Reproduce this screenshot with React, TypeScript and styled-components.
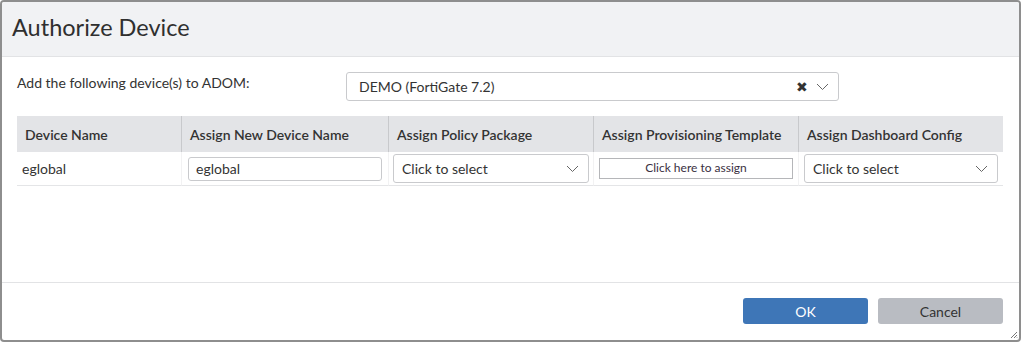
import React from "react";
import styled, { createGlobalStyle } from "styled-components";

const GlobalStyle = createGlobalStyle`
  html, body {
    margin: 0;
    padding: 0;
    background: #ffffff;
  }
  body {
    font-family: Lato, "Open Sans", "Liberation Sans", sans-serif;
    color: #333333;
  }
  * {
    box-sizing: border-box;
  }
`;

const Dialog = styled.div`
  position: relative;
  width: 1021px;
  height: 342px;
  border: 2px solid #8e8e8e;
  border-radius: 4px;
  background: #ffffff;
  display: flex;
  flex-direction: column;
  overflow: hidden;
`;

const Header = styled.div`
  height: 55px;
  flex: none;
  background: #f1f2f4;
  border-bottom: 1px solid #e2e3e5;
  display: flex;
  align-items: center;
  padding-left: 10px;
  padding-bottom: 4px;
  h1 {
    margin: 0;
    font-size: 23.5px;
    font-weight: 400;
    color: #2f2f2f;
  }
`;

const Body = styled.div`
  flex: 1;
  padding: 15px 15px 0 15px;
`;

const AdomRow = styled.div`
  display: grid;
  grid-template-columns: 329px 493px;
  align-items: center;
  font-size: 14px;
  color: #333;
  label {
    margin-top: -8px;
  }
`;

const SelectBox = styled.div<{ $h?: number; $pad?: number }>`
  height: ${(p) => p.$h ?? 29}px;
  width: 100%;
  border: 1px solid #c9cacd;
  border-radius: 3px;
  background: #fff;
  display: flex;
  align-items: center;
  padding: 0 9px 0 ${(p) => p.$pad ?? 12}px;
  font-size: 14px;
  color: #333;
  span.value {
    flex: 1;
  }
`;

const Clear = styled.span`
  font-size: 14px;
  color: #333;
  margin-right: 8px;
  line-height: 1;
`;

const Table = styled.div`
  margin-top: 15px;
  width: 986px;
  display: grid;
  grid-template-columns: 164px 207px 205px 205px 205px;
`;

const HeadCell = styled.div`
  height: 36px;
  background: #e3e4e7;
  display: flex;
  align-items: center;
  padding-left: 8px;
  font-size: 14px;
  font-weight: 600;
  color: #333;
  & + & {
    border-left: 1px solid #c8c9cc;
  }
`;

const Cell = styled.div<{ $pad?: number }>`
  height: 34px;
  display: flex;
  align-items: center;
  padding: 0 ${(p) => p.$pad ?? 5}px;
  border-bottom: 1px solid #e4e5e7;
  font-size: 14px;
  color: #333;
  & + & {
    border-left: 1px solid #f2f2f3;
  }
`;

const TextInput = styled.input`
  width: 100%;
  height: 24px;
  border: 1px solid #c9cacd;
  border-radius: 3px;
  padding: 0 7px;
  font-family: inherit;
  font-size: 14px;
  color: #333;
  outline: none;
`;

const AssignButton = styled.button`
  width: 100%;
  height: 21px;
  border: 1px solid #b5b6b9;
  border-radius: 0;
  background: #fff;
  font-family: inherit;
  font-size: 12px;
  color: #3a2f3f;
  padding: 0 0 2px;
`;

const Footer = styled.div`
  flex: none;
  height: 58px;
  border-top: 1px solid #e2e3e5;
  display: flex;
  justify-content: flex-end;
  align-items: flex-start;
  gap: 10px;
  padding: 15px 16px 0 0;
`;

const Button = styled.button<{ $primary?: boolean }>`
  width: 125px;
  height: 26px;
  border: none;
  border-radius: 3px;
  font-family: inherit;
  font-size: 14px;
  background: ${(p) => (p.$primary ? "#3e76b7" : "#b9bcc2")};
  color: ${(p) => (p.$primary ? "#ffffff" : "#333333")};
`;

const Grip = styled.svg`
  position: absolute;
  right: 1px;
  bottom: 1px;
`;

const Chevron = () => (
  <svg width="13" height="8" viewBox="0 0 13 8">
    <path d="M1 1l5.5 5.5L12 1" fill="none" stroke="#666" strokeWidth="1" />
  </svg>
);

const columns = [
  "Device Name",
  "Assign New Device Name",
  "Assign Policy Package",
  "Assign Provisioning Template",
  "Assign Dashboard Config",
];

export default function App() {
  return (
    <>
      <GlobalStyle />
      <Dialog>
        <Header>
          <h1>Authorize Device</h1>
        </Header>
        <Body>
          <AdomRow>
            <label>Add the following device(s) to ADOM:</label>
            <SelectBox>
              <span className="value">DEMO (FortiGate 7.2)</span>
              <Clear>✖</Clear>
              <Chevron />
            </SelectBox>
          </AdomRow>
          <Table>
            {columns.map((c) => (
              <HeadCell key={c}>{c}</HeadCell>
            ))}
            <Cell $pad={5}>eglobal</Cell>
            <Cell $pad={6}>
              <TextInput defaultValue="eglobal" />
            </Cell>
            <Cell $pad={4}>
              <SelectBox $pad={8}>
                <span className="value">Click to select</span>
                <Chevron />
              </SelectBox>
            </Cell>
            <Cell $pad={5}>
              <AssignButton>Click here to assign</AssignButton>
            </Cell>
            <Cell $pad={5}>
              <SelectBox $pad={8}>
                <span className="value">Click to select</span>
                <Chevron />
              </SelectBox>
            </Cell>
          </Table>
        </Body>
        <Footer>
          <Button $primary>OK</Button>
          <Button>Cancel</Button>
        </Footer>
        <Grip width="8" height="8" viewBox="0 0 8 8">
          <path d="M7 1L1 7M7 4L4 7M7 6.5L6.5 7" stroke="#777" strokeWidth="1" />
        </Grip>
      </Dialog>
    </>
  );
}
